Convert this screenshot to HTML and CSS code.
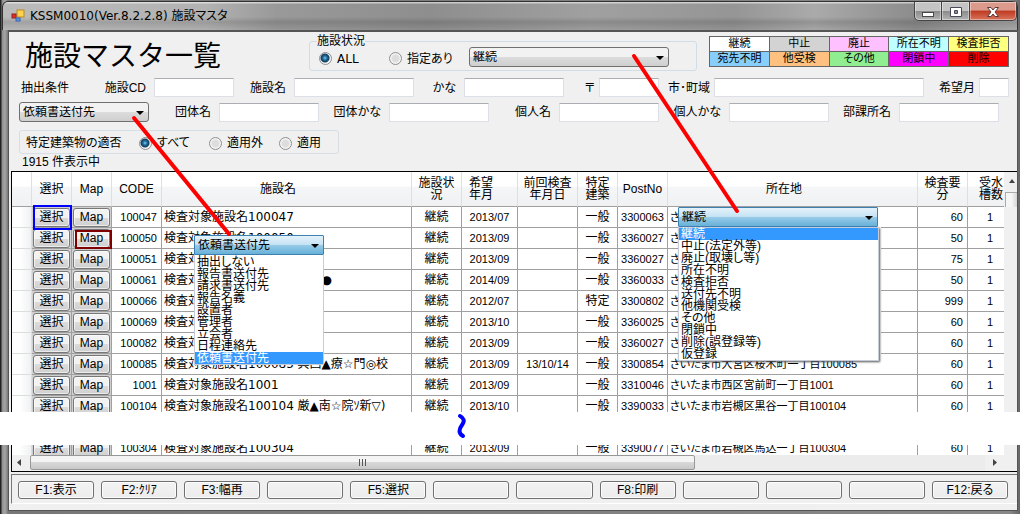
FILE: index.html
```html
<!DOCTYPE html>
<html lang="ja">
<head>
<meta charset="utf-8">
<title>施設マスタ</title>
<link rel="stylesheet" href="styles.css">
</head>
<body>
<div class="window">
  <header class="titlebar">
    <svg class="app-icon" width="14" height="14" viewBox="0 0 14 14" aria-hidden="true">
      <rect x="6" y="1" width="7" height="7" fill="#ffd34d" stroke="#b98a1a"/>
      <rect x="1" y="5" width="4" height="4" fill="#d8322a" stroke="#9c1c16"/>
      <rect x="5" y="9" width="4" height="3" fill="#5a96ea" stroke="#3566b8"/>
    </svg>
    <span class="caption">KSSM0010(Ver.8.2.2.8) 施設マスタ</span>
    <div class="winbtns">
      <button class="wb wb-min" aria-label="最小化"><svg width="14" height="12" viewBox="0 0 14 12"><rect x="1.500" y="6.500" width="11" height="4" fill="#fff" stroke="#4a4a4a"/></svg></button>
      <button class="wb wb-max" aria-label="最大化"><svg width="14" height="12" viewBox="0 0 14 12"><path d="M1.500 1.500h11v9h-11zM5.500 4.500v3h3v-3z" fill="#fff" fill-rule="evenodd" stroke="#4a4a5a"/></svg></button>
      <button class="wb wb-close" aria-label="閉じる"><svg width="14" height="12" viewBox="0 0 14 12"><path d="M1.500 1.500h3.500l2 2.500 2-2.500h3.500l-3.500 4.500 3.500 4.500h-3.500l-2-2.500-2 2.500h-3.500l3.500-4.500z" fill="#fff" stroke="#5a3a3a"/></svg></button>
    </div>
  </header>

  <main class="client">
    <section class="top">
      <h1>施設マスタ一覧</h1>
      <fieldset class="status">
        <legend>施設状況</legend>
        <label class="radio"><input type="radio" name="st" checked><span class="wide">ALL</span></label>
        <label class="radio"><input type="radio" name="st"><span>指定あり</span></label>
        <span class="combo combo-status"><select aria-label="施設状況"><option>継続</option></select><svg class="arrow" viewBox="0 0 8 4"><path d="M0 0h8l-4 4z"/></svg></span>
      </fieldset>
      <ul class="key">
        <li class="k1">継続</li><li class="k2">中止</li><li class="k3">廃止</li><li class="k4">所在不明</li><li class="k5">検査拒否</li>
        <li class="k6">宛先不明</li><li class="k7">他受検</li><li class="k8">その他</li><li class="k9">閉鎖中</li><li class="k10">削除</li>
      </ul>
    </section>

    <section class="filters filters-a">
      <span class="lead">抽出条件</span>
      <label for="cd">施設CD</label><input id="cd" type="text">
      <label for="nm">施設名</label><input id="nm" type="text">
      <label for="kn">かな</label><input id="kn" type="text">
      <label for="zip" class="near">〒</label><input id="zip" type="text">
      <label for="town" class="near">市･町域</label><input id="town" type="text">
      <label for="mon" class="near">希望月</label><input id="mon" type="text">
    </section>
    <section class="filters filters-b">
      <span class="combo"><select aria-label="抽出条件"><option>依頼書送付先</option></select><svg class="arrow" viewBox="0 0 8 4"><path d="M0 0h8l-4 4z"/></svg></span>
      <label for="gn">団体名</label><input id="gn" type="text">
      <label for="gk">団体かな</label><input id="gk" type="text">
      <label for="pn">個人名</label><input id="pn" type="text">
      <label for="pk">個人かな</label><input id="pk" type="text">
      <label for="dp">部課所名</label><input id="dp" type="text">
    </section>
    <section class="apply" role="radiogroup" aria-labelledby="apl">
      <span id="apl" class="apply-title">特定建築物の適否</span>
      <label class="radio"><input type="radio" name="ap" checked><span>すべて</span></label>
      <label class="radio"><input type="radio" name="ap"><span>適用外</span></label>
      <label class="radio"><input type="radio" name="ap"><span>適用</span></label>
    </section>
    <p class="count">1915 件表示中</p>

    <section class="grid">
      <div class="view">
        <div class="rows">
          <table>
            <colgroup><col class="c-head"><col class="c-btn"><col class="c-btn"><col class="c-50"><col class="c-name"><col class="c-50"><col class="c-ym"><col class="c-date"><col class="c-kind"><col class="c-50"><col class="c-addr"><col class="c-50"><col class="c-tank"></colgroup>
            <thead>
              <tr><th></th><th>選択</th><th>Map</th><th>CODE</th><th class="title">施設名</th><th>施設状<br>況</th><th class="left">希望<br>年月</th><th>前回検査<br>年月日</th><th>特定<br>建築</th><th>PostNo</th><th class="title">所在地</th><th>検査要<br>分</th><th class="last">受水<br>槽数</th></tr>
            </thead>
            <tbody>
              <tr><td class="rh"></td><td class="b"><button>選択</button></td><td class="b"><button>Map</button></td><td class="n">100047</td><td class="name">検査対象施設名100047</td><td class="c">継続</td><td class="c">2013/07</td><td class="c"></td><td class="c">一般</td><td class="c">3300063</td><td class="addr">さいたま市</td><td class="n">60</td><td class="c">1</td></tr>
              <tr><td class="rh"></td><td class="b"><button>選択</button></td><td class="b"><button>Map</button></td><td class="n">100050</td><td class="name">検査対象施設名100050</td><td class="c">継続</td><td class="c">2013/09</td><td class="c"></td><td class="c">一般</td><td class="c">3360027</td><td class="addr">さいたま市</td><td class="n">50</td><td class="c">1</td></tr>
              <tr><td class="rh"></td><td class="b"><button>選択</button></td><td class="b"><button>Map</button></td><td class="n">100051</td><td class="name">検査対象施設名100051</td><td class="c">継続</td><td class="c">2013/09</td><td class="c"></td><td class="c">一般</td><td class="c">3360027</td><td class="addr">さいたま市</td><td class="n">75</td><td class="c">1</td></tr>
              <tr><td class="rh"></td><td class="b"><button>選択</button></td><td class="b"><button>Map</button></td><td class="n">100061</td><td class="name">検査対象施設名100061　　&nbsp;●</td><td class="c">継続</td><td class="c">2014/09</td><td class="c"></td><td class="c">一般</td><td class="c">3360033</td><td class="addr">さいたま市</td><td class="n">50</td><td class="c">1</td></tr>
              <tr><td class="rh"></td><td class="b"><button>選択</button></td><td class="b"><button>Map</button></td><td class="n">100066</td><td class="name">検査対象施設名100066</td><td class="c">継続</td><td class="c">2012/07</td><td class="c"></td><td class="c">特定</td><td class="c">3300802</td><td class="addr">さいたま市</td><td class="n">999</td><td class="c">1</td></tr>
              <tr><td class="rh"></td><td class="b"><button>選択</button></td><td class="b"><button>Map</button></td><td class="n">100069</td><td class="name">検査対象施設名100069</td><td class="c">継続</td><td class="c">2013/10</td><td class="c"></td><td class="c">一般</td><td class="c">3360025</td><td class="addr">さいたま市</td><td class="n">60</td><td class="c">1</td></tr>
              <tr><td class="rh"></td><td class="b"><button>選択</button></td><td class="b"><button>Map</button></td><td class="n">100082</td><td class="name">検査対象施設名100082</td><td class="c">継続</td><td class="c">2013/09</td><td class="c"></td><td class="c">一般</td><td class="c">3360027</td><td class="addr">さいたま市</td><td class="n">60</td><td class="c">1</td></tr>
              <tr><td class="rh"></td><td class="b"><button>選択</button></td><td class="b"><button>Map</button></td><td class="n">100085</td><td class="name">検査対象施設名100085 典凸▲療☆門◎校</td><td class="c">継続</td><td class="c">2013/09</td><td class="c">13/10/14</td><td class="c">一般</td><td class="c">3300854</td><td class="addr">さいたま市大宮区桜木町一丁目100085</td><td class="n">60</td><td class="c">1</td></tr>
              <tr><td class="rh"></td><td class="b"><button>選択</button></td><td class="b"><button>Map</button></td><td class="n">1001</td><td class="name">検査対象施設名1001</td><td class="c">継続</td><td class="c">2013/09</td><td class="c"></td><td class="c">一般</td><td class="c">3310046</td><td class="addr">さいたま市西区宮前町一丁目1001</td><td class="n">60</td><td class="c">1</td></tr>
              <tr><td class="rh"></td><td class="b"><button>選択</button></td><td class="b"><button>Map</button></td><td class="n">100104</td><td class="name">検査対象施設名100104 厳▲南☆院ｿ新▽)</td><td class="c">継続</td><td class="c">2013/10</td><td class="c"></td><td class="c">一般</td><td class="c">3390033</td><td class="addr">さいたま市岩槻区黒谷一丁目100104</td><td class="n">60</td><td class="c">1</td></tr>
              <tr class="skip"><td colspan="13"></td></tr>
              <tr><td class="rh"></td><td class="b"><button>選択</button></td><td class="b"><button>Map</button></td><td class="n">100304</td><td class="name">検査対象施設名100304</td><td class="c">継続</td><td class="c">2013/09</td><td class="c"></td><td class="c">一般</td><td class="c">3390077</td><td class="addr">さいたま市岩槻区馬込一丁目100304</td><td class="n">60</td><td class="c">1</td></tr>
            </tbody>
          </table>
        </div>
        <div class="vbar"><svg width="12" height="20" viewBox="0 0 12 20"><path d="M5 11l3-4 3 4z" fill="#444"/></svg><span class="vthumb"></span></div>
      </div>
      <div class="hbar">
        <svg width="18" height="16" viewBox="0 0 18 16"><path d="M9 4v7l-4-3.500z" fill="#444"/></svg>
        <span class="hthumb"><i></i><i></i><i></i></span>
        <span class="htrack"></span>
        <svg width="32" height="16" viewBox="0 0 32 16"><path d="M8 4v7l4-3.500z" fill="#444"/></svg>
      </div>
    </section>

    <footer class="keys">
      <button>F1:表示</button><button>F2:ｸﾘｱ</button><button>F3:幅再</button><button aria-label="F4"></button><button>F5:選択</button><button aria-label="F6"></button><button aria-label="F7"></button><button>F8:印刷</button><button aria-label="F9"></button><button aria-label="F10"></button><button aria-label="F11"></button><button>F12:戻る</button>
    </footer>
  </main>
</div>

<div class="popup popup-doc">
  <span class="combo hot"><select aria-label="送付先"><option>依頼書送付先</option></select><svg class="arrow" viewBox="0 0 8 4"><path d="M0 0h8l-4 4z"/></svg></span>
  <ul><li>抽出しない</li><li>報告書送付先</li><li>請求書送付先</li><li>報告名義</li><li>設置者</li><li>管理者</li><li>立会者</li><li>日程連絡先</li><li class="sel">依頼書送付先</li></ul>
</div>
<div class="popup popup-state">
  <span class="combo hot"><select aria-label="状況"><option>継続</option></select><svg class="arrow" viewBox="0 0 8 4"><path d="M0 0h8l-4 4z"/></svg></span>
  <ul><li class="sel">継続</li><li>中止(法定外等)</li><li>廃止(取壊し等)</li><li>所在不明</li><li>検査拒否</li><li>送付先不明</li><li>他機関受検</li><li>その他</li><li>閉鎖中</li><li>削除(誤登録等)</li><li>仮登録</li></ul>
</div>
<div class="tear"></div>
<svg class="marks" width="1020" height="514" viewBox="0 0 1020 514" fill="none" aria-hidden="true">
  <g stroke="#f00" stroke-width="4" stroke-linecap="round"><path d="M134 118L229 234"/><path d="M634 56L737 211"/></g>
  <rect x="34" y="206" width="37" height="23" stroke="#00f" stroke-width="2"/>
  <rect x="76" y="231" width="35" height="17" stroke="#800000" stroke-width="2"/>
  <path d="M460 416c4 2 5 5 2 9s-4 8 1 11" stroke="#00f" stroke-width="4" stroke-linecap="round"/>
</svg>
</body>
</html>
```
FILE: styles.css
```css
* { box-sizing: border-box; }
body {
  margin: 0;
  position: relative;
  overflow: hidden;
  color: #000;
  font: 12px/12px "Liberation Sans", "Noto Sans CJK JP", sans-serif;
  font-feature-settings: "palt";
}
button, input, select { font: inherit; font-feature-settings: inherit; color: inherit; margin: 0; }
ul { list-style: none; margin: 0; padding: 0; }

.window {
  display: flex;
  flex-direction: column;
  height: 100vh;
  padding: 1px 2px 3px;
  background: linear-gradient(90deg, #222 0 1px, #8d8d8d 2px, #a5a5a5 5px, #777 8px, #888 99%, #666);
}
.titlebar {
  display: flex;
  align-items: flex-start;
  height: 29px;
  padding-left: 8px;
  border: 1px solid #333;
  border-bottom: 0;
  border-radius: 6px 6px 0 0;
  background:
    linear-gradient(180deg, #fff8 0 1px, #fff0 2px 15px, #0002 20px, #0000 29px),
    linear-gradient(90deg, #bbb, #b2b2b2 20%, #999 27%, #8e8e8e 42%, #a0a0a0 58%, #959595 72%, #aaa 80%, #8c8c8c 90%, #aaa);
}
.app-icon { margin-top: 7px; }
.caption { flex: 1; margin: 8px 0 0 5px; font-family: "DejaVu Sans", "Noto Sans CJK JP", sans-serif; }
.winbtns { display: flex; }
.wb {
  width: 28px;
  height: 19px;
  padding: 2px 0 0;
  border: 1px solid #444;
  border-top: 0;
  background: linear-gradient(#c4c4c4 50%, #8a8a8a 50%, #b4b4b4);
  box-shadow: inset 0 0 0 1px #fff6;
  line-height: 0;
}
.wb-min { border-radius: 0 0 0 5px; }
.wb-max { border-left: 0; }
.wb-close { width: 47px; border-left: 0; border-radius: 0 0 5px 0; background: linear-gradient(#dc9a8c 45%, #bf3a22 50%, #d8745c); }

.client {
  flex: 1;
  display: flex;
  flex-direction: column;
  min-height: 0;
  margin-left: 6px;
  border: 1px solid #555;
  border-top-width: 2px;
  background: #f0f0f0;
}
.top { display: flex; justify-content: space-between; align-items: flex-start; padding: 3px 8px 0 16px; }
h1 { flex: 0 0 284px; margin: 8px 0 0; font-size: 28px; line-height: 28px; font-weight: 400; font-feature-settings: normal; }
.status {
  display: flex;
  align-items: center;
  flex: 0 0 388px;
  height: 36px;
  margin: 0 auto 0 0;
  padding: 0 0 0 9px;
  border: 1px solid #d0dce6;
  border-radius: 3px;
}
.status legend { padding: 0; margin-left: -2px; }
.radio { display: flex; flex: none; align-items: center; gap: 5px; width: 70px; white-space: nowrap; }
.radio:last-child { width: auto; }
.wide { font-family: "DejaVu Sans", sans-serif; }
input[type=radio] {
  appearance: none;
  flex: none;
  width: 13px;
  height: 13px;
  border: 1px solid #8e8f8f;
  border-radius: 50%;
  background: radial-gradient(#ddd 3px, #f4f4f4 5px);
}
input[type=radio]:checked { background: radial-gradient(circle at 5px 5px, #7fd0f0 0, #1e6e9c 2px, #123c5c 4px, #f4f4f4 5px); }
.combo { position: relative; display: block; }
.combo select {
  appearance: none;
  display: block;
  width: 100%;
  height: 20px;
  padding: 0 3px;
  border: 1px solid #707070;
  border-radius: 3px;
  background: linear-gradient(#f2f2f2 50%, #dcdcdc 50%, #cfcfcf);
}
.arrow { position: absolute; right: 5px; top: 9px; width: 8px; height: 4px; pointer-events: none; }
.combo-status { align-self: flex-start; width: 200px; margin-left: 10px; }
.key {
  display: grid;
  grid-template-columns: repeat(5, 1fr);
  gap: 1px;
  width: 300px;
  margin-top: 1px;
  border: 1px solid #666;
  background: #666;
}
.key li { height: 14px; line-height: 13px; text-align: center; font-size: 11px; }
.k1 { background: #fff; } .k2 { background: #d3d3d3; } .k3 { background: #ffc0ff; } .k4 { background: #c0ffff; } .k5 { background: #ffff80; }
.k6 { background: #87cefa; } .k7 { background: #ffc080; } .k8 { background: #90ee90; } .k9 { background: #f0f; } .k10 { background: #f00; }

.filters { display: grid; align-items: center; padding: 0 8px 0 10px; }
.filters-a { grid-template-columns: 50px 85px 80px 60px 120px 50px 100px 35px 60px 55px 1fr 55px 30px; margin-top: 7px; }
.filters-b { grid-template-columns: 130px repeat(5, 70px 100px); margin-top: 5px; }
.filters label { padding-right: 8px; text-align: right; white-space: nowrap; }
.filters .near { padding-right: 4px; }
.lead { padding-left: 2px; }
input[type=text] { min-width: 0; width: 100%; height: 19px; border: 1px solid #dcdfe8; border-top-color: #abadb3; border-radius: 1px; background: #fff; }

.apply {
  display: flex;
  align-items: center;
  align-self: flex-start;
  width: 320px;
  height: 24px;
  margin: 8px 0 0 10px;
  padding: 2px 0 0 6px;
  border: 1px solid #d5dfe5;
  border-radius: 3px;
}
.apply-title { flex: none; width: 113px; }
.count { margin: 2px 0 0 13px; }

.grid { flex: 1; min-height: 0; display: flex; flex-direction: column; margin: 3px 0 0 2px; border: 1px solid #000; border-right: 0; background: #fff; }
.view { flex: 1; min-height: 0; display: flex; overflow: hidden; }
.rows { flex: 1; min-width: 0; }
table { width: 100%; table-layout: fixed; border-spacing: 0; }
.c-head { width: 20px; } .c-btn { width: 40px; } .c-50 { width: 50px; } .c-name { width: 250px; } .c-ym { width: 56px; }
.c-date { width: 60px; } .c-kind { width: 40px; } .c-tank { width: 36px; }
th {
  height: 35px;
  padding: 0 1px;
  font-weight: 400;
  white-space: nowrap;
  border-right: 1px solid #dedfe1;
  border-bottom: 1px solid #a0a0a0;
  background: linear-gradient(#fff 40%, #f5f6f8 45%, #f0f1f3);
}
th.left { text-align: left; padding-left: 7px; }
th.title { padding-right: 18px; }
th.last { text-align: right; border-right: 0; }
td { height: 21px; padding: 0 2px; white-space: nowrap; overflow: hidden; border-right: 1px solid #a0a0a0; border-bottom: 1px solid #a0a0a0; }
td.n, td.addr, td.c:nth-child(7), td.c:nth-child(8), td.c:nth-child(10), td.c:last-child { font-size: 11px; }
td.n { text-align: right; padding-right: 4px; }
td.c { text-align: center; }
td:last-child { border-right: 0; }
td.c:last-child { padding-left: 10px; }
td.rh { background: linear-gradient(90deg, #fff 40%, #f0f1f3); border-right-color: #ddd; border-bottom-color: #ddd; }
td.name { font-family: "DejaVu Sans", "Noto Sans CJK JP", sans-serif; font-feature-settings: normal; }
td.b { padding: 0 1px; background: #d0d0d0; }
td.b button {
  display: block;
  width: 37px;
  height: 19px;
  padding: 0;
  border: 1px solid #777;
  border-radius: 3px;
  background: linear-gradient(#f2f2f2 50%, #dcdcdc 50%, #cfcfcf);
  box-shadow: inset 0 0 0 1px #fff9;
}
.vbar { width: 13px; background: #f0f0f0; line-height: 0; }
.vthumb { display: block; height: 15px; margin-left: 1px; border: 1px solid #aaa; border-right: 0; border-bottom: 0; background: linear-gradient(90deg, #f5f5f5 50%, #d5d5d5); }
.hbar { display: flex; height: 16px; background: #f0f0f0; }
.hthumb { display: flex; justify-content: center; align-items: center; gap: 2px; flex: 0 1 665px; height: 15px; border: 1px solid #989898; border-radius: 2px; background: linear-gradient(#f4f4f4 45%, #d8d8d8 50%, #c8c8c8); }
.hthumb i { width: 1px; height: 7px; background: #555; }
.htrack { flex: 1; background: #ececec; }

.keys { display: flex; gap: 7px; margin: 2px 0 6px 2px; padding: 6px 9px 4px 6px; border: 1px solid #777; border-right: 0; border-bottom-color: #fff; }
.keys button { flex: 1 1 0; min-width: 0; height: 18px; padding: 0; border: 1px solid #707070; border-radius: 3px; background: linear-gradient(#f3f3f3, #ececec); box-shadow: inset 0 0 0 1px #fffc; white-space: nowrap; }

.popup { position: absolute; }
.popup ul { background: #fff; border: 1px solid #c8ccd8; }
.popup li { height: 12px; padding-left: 2px; white-space: nowrap; }
.popup .sel { background: #39f; color: #fff; }
.hot select { border-color: #3c7fb1; border-radius: 1px; background: linear-gradient(#e4f2fa, #c4e2f4 50%, #98cce8 50%, #68b0d8); }
.popup-doc { left: 194px; top: 235px; width: 130px; }
.popup-doc ul { border-top: 0; padding-top: 1px; }
.popup-state { left: 678px; top: 207px; width: 203px; background: #fff; }
.popup-state .combo { width: 200px; }
.popup-state ul { width: 201px; box-shadow: 1px 1px 2px #555; }
.tear { position: absolute; left: 0; right: 0; top: 412px; height: 33px; background: #fff; }
.marks { position: absolute; left: 0; top: 0; pointer-events: none; }
```
